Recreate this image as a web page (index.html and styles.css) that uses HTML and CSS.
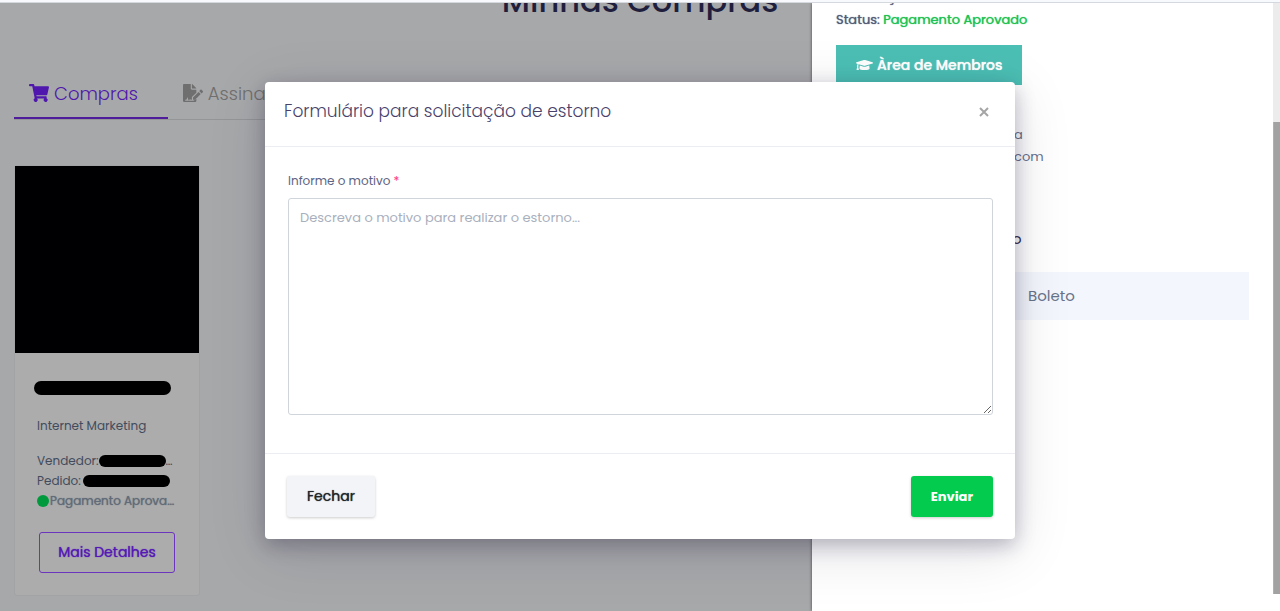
FILE: index.html
```html
<!DOCTYPE html>
<html lang="pt-BR">
<head>
<meta charset="utf-8">
<title>Minhas Compras</title>
<link rel="stylesheet" href="styles.css">
</head>
<body>
<div class="topline"></div>
<main class="page">
  <h1 class="page-title">Minhas Compras</h1>
  <nav class="tabs">
    <a class="tab tab-active" href="#compras">
      <svg class="tab-icon" viewBox="0 0 576 512" fill="currentColor" aria-hidden="true"><path d="M528 301l47-208c4-15-8-29-23-29H159l-9-45C148 8 138 0 127 0H24C11 0 0 11 0 24v16c0 13 11 24 24 24h70l70 343a56 56 0 1 0 67 9h210a56 56 0 1 0 64-10l5-26c4-14-8-28-23-28H218l-6-32h293c11 0 21-8 23-19z"/></svg>
      Compras
    </a>
    <a class="tab" href="#assinaturas">
      <svg class="tab-icon" viewBox="0 0 576 512" fill="currentColor" aria-hidden="true"><path fill-rule="evenodd" d="M24 0C11 0 0 11 0 24v464c0 13 11 24 24 24h336c13 0 24-11 24-24v-82l-68 66c-8 5-16 8-25 8H64v-32h22c10 0 19-7 23-17l19-58 28 83c4 12 21 14 27 2l8-15c5-8 18-9 25 0 5 6 7 5 40 5v-74l128-127v-87H256c-18 0-32-14-32-32V0zm232 0v128h128c0-6-2-12-7-17L273 7c-5-5-11-7-17-7zM288 386v62h62l161-161-62-62zM568 195l-28-28c-11-11-29-11-40 0l-32 33 68 67 32-32c11-11 11-29 0-40z"/></svg>
      Assinaturas
    </a>
  </nav>
  <article class="card">
    <div class="card-image"></div>
    <div class="card-body">
      <div class="redacted redacted-name"></div>
      <p class="category">Internet Marketing</p>
      <p class="detail">Vendedor:<span class="redacted redacted-seller"></span>…</p>
      <p class="detail">Pedido:<span class="redacted redacted-order"></span></p>
      <p class="detail paid"><span class="dot"></span>Pagamento Aprova…</p>
      <button class="btn-outline" type="button">Mais Detalhes</button>
    </div>
  </article>
</main>

<aside class="drawer">
  <div class="drawer-content">
    <p class="drawer-line drawer-first">Informação</p>
    <p class="drawer-line">Status: <span class="approved">Pagamento Aprovado</span></p>
    <a class="members" href="#membros">
      <svg class="cap-icon" viewBox="0 0 640 512" fill="currentColor" aria-hidden="true"><path d="M622 153L343 67c-15-4-31-4-46 0L18 153c-24 8-24 40 0 47l49 15c-11 14-18 30-18 48-10 6-17 16-17 28 0 11 6 21 15 27L21 430c-2 9 5 18 15 18h56c10 0 17-9 15-18L81 318c9-6 15-16 15-27s-6-21-15-27c1-15 8-28 20-37l196 60c27 8 43 1 46 0l279-86c24-8 24-40 0-48zM352 318c-32 10-57 2-64 0l-145-45-15 111c0 35 86 64 192 64s192-29 192-64l-15-111z"/></svg>
      Àrea de Membros
    </a>
    <div class="contact">
      <p>a</p>
      <p>com</p>
    </div>
    <h2 class="drawer-heading">o</h2>
    <p class="method">Boleto</p>
  </div>
  <div class="scrollbar"><div class="thumb"></div></div>
</aside>

<div class="modal-layer">
  <form class="modal" role="dialog" aria-labelledby="modal-title">
    <header class="modal-header">
      <h2 class="modal-title" id="modal-title">Formulário para solicitação de estorno</h2>
      <button class="close" type="button" aria-label="Fechar janela">
        <svg class="close-icon" viewBox="0 0 10 10" fill="none" stroke="currentColor" stroke-width="2" aria-hidden="true"><path d="M1 1l8 8M9 1L1 9"/></svg>
      </button>
    </header>
    <div class="modal-body">
      <label class="label" for="motivo">Informe o motivo <span class="required">*</span></label>
      <textarea class="reason" id="motivo" placeholder="Descreva o motivo para realizar o estorno..."></textarea>
    </div>
    <footer class="modal-footer">
      <button class="btn btn-light" type="button">Fechar</button>
      <button class="btn btn-success" type="submit">Enviar</button>
    </footer>
  </form>
</div>
</body>
</html>
```
FILE: styles.css
```css
* {
  box-sizing: border-box;
}

body {
  margin: 0;
  height: 100vh;
  overflow: hidden;
  display: flex;
  flex-direction: column;
  position: relative;
  background: #a7a8aa;
  color: #424b5c;
  font-family: Poppins, Inter, "Open Sans", sans-serif;
  font-size: 13px;
}

h1, h2, p {
  margin: 0;
}

button, textarea {
  font-family: inherit;
}

.topline {
  flex: none;
  height: 3px;
  background: #f7f9fd;
  border-bottom: 1px solid #d5d8dc;
  position: relative;
  z-index: 3;
}

.page {
  padding: 0 14px;
}

.page-title {
  margin-top: -26px;
  color: #1f1f3d;
  font-size: 32px;
  font-weight: 500;
  line-height: 48px;
  text-align: center;
}

.tabs {
  display: flex;
  margin-top: 42px;
  border-bottom: 1px solid #949597;
}

.tab {
  display: flex;
  align-items: center;
  gap: 5px;
  padding: 2px 30px 0 15px;
  height: 52px;
  color: #6f6f6f;
  font-size: 18px;
  font-weight: 300;
  text-decoration: none;
  border-bottom: 2px solid transparent;
}

.tab-active {
  color: #4f17ad;
  border-color: #4f1d9c;
}

.tab-icon {
  width: 20px;
  height: 18px;
}

.card {
  width: 186px;
  margin-top: 45px;
  background: #acacac;
  border: 1px solid #a2a3a5;
  border-radius: 3px;
}

.card-image {
  height: 187px;
  background: #000003;
}

.card-body {
  padding: 28px 24px 22px 22px;
}

.redacted {
  background: #000;
  border-radius: 8px;
}

.redacted-name {
  height: 14px;
  margin: 0 4px 0 -3px;
}

.category {
  margin: 21px 0 15px;
  font-size: 12px;
  line-height: 20px;
}

.detail {
  display: flex;
  align-items: center;
  font-size: 12px;
  line-height: 20px;
  white-space: nowrap;
}

.redacted-seller {
  flex: none;
  width: 67px;
  height: 12px;
}

.redacted-order {
  flex: none;
  width: 87px;
  height: 12px;
  margin-left: 2px;
}

.paid {
  gap: 1px;
  color: #626b78;
  text-shadow: 0 0 1px currentColor;
}

.dot {
  flex: none;
  width: 12px;
  height: 12px;
  border-radius: 50%;
  background: #009a3c;
}

.btn-outline {
  display: block;
  width: 136px;
  height: 41px;
  margin: 21px 0 0 2px;
  padding: 0;
  background: none;
  border: 1px solid #6b35bd;
  border-radius: 3px;
  color: #5519b5;
  font-size: 14px;
  font-weight: 400;
  text-shadow: 0 0 1px currentColor;
}

.drawer {
  position: absolute;
  top: 3px;
  right: 0;
  bottom: 0;
  width: 468px;
  display: flex;
  background: #fff;
  box-shadow: 0 0 3px rgba(0, 0, 0, 0.6);
  overflow: hidden;
  z-index: 1;
}

.drawer-content {
  flex: 1;
  padding: 0 24px;
}

.drawer-line {
  color: #535d78;
  font-size: 13px;
  line-height: 22px;
  text-shadow: 0 0 1px currentColor;
}

.drawer-first {
  margin-top: -16px;
}

.approved {
  color: #1fc152;
}

.members {
  display: inline-flex;
  align-items: center;
  gap: 4px;
  height: 40px;
  margin-top: 14px;
  padding: 0 20px;
  background: #4cbfb4;
  color: #fff;
  font-size: 14px;
  font-weight: 500;
  text-decoration: none;
  text-shadow: 0 0 1px currentColor;
}

.cap-icon {
  width: 17px;
  height: 14px;
}

.contact {
  margin: 39px 0 0 178px;
  color: #68718a;
  font-size: 13px;
  line-height: 22px;
}

.drawer-heading {
  margin: 60px 0 0 176px;
  color: #33334f;
  font-size: 15px;
  font-weight: 400;
  line-height: 22px;
}

.method {
  height: 48px;
  margin-top: 22px;
  padding-left: 192px;
  background: #f3f6fc;
  color: #68738a;
  font-size: 15px;
  line-height: 48px;
}

.scrollbar {
  width: 7px;
  padding: 119px 0 17px;
  background: linear-gradient(#ececec 80%, #fff 80%);
}

.thumb {
  height: 100%;
  background: #a2a2a2;
  border-left: 1px solid #b0b0b0;
}

.modal-layer {
  position: absolute;
  inset: 0;
  padding: 82px 16px 0;
  z-index: 2;
}

.modal {
  max-width: 750px;
  margin: 0 auto;
  background: #fff;
  border-radius: 4px;
  box-shadow: 0 6px 20px rgba(20, 15, 50, 0.28), 0 12px 60px rgba(20, 15, 50, 0.12);
}

.modal-header {
  display: flex;
  align-items: flex-start;
  justify-content: space-between;
  height: 65px;
  padding: 17px 26px 0 19px;
  border-bottom: 1px solid #ebedf2;
}

.modal-title {
  color: #48426b;
  font-size: 17px;
  font-weight: 300;
  line-height: 24px;
}

.close {
  display: flex;
  padding: 8px 0;
  background: none;
  border: 0;
  color: #a5a5a5;
}

.close-icon {
  width: 10px;
  height: 10px;
}

.modal-body {
  padding: 24px 22px 38px 23px;
}

.label {
  display: block;
  margin-bottom: 7px;
  color: #5e6482;
  font-size: 12px;
  line-height: 20px;
}

.required {
  color: #fd397a;
}

.reason {
  display: block;
  width: 100%;
  height: 217px;
  padding: 10px 11px;
  border: 1px solid #d0d5dc;
  border-radius: 3px;
  font-size: 13px;
  line-height: 18px;
  resize: vertical;
}

.reason::placeholder {
  color: #a9b0bd;
}

.modal-footer {
  display: flex;
  justify-content: space-between;
  padding: 22px;
  border-top: 1px solid #ebedf2;
}

.btn {
  height: 41px;
  padding: 0 20px;
  border: 0;
  border-radius: 3px;
  font-size: 13px;
  box-shadow: 0 1px 3px rgba(0, 0, 0, 0.2);
}

.btn-light {
  background: #f3f4f7;
  color: #212529;
  font-size: 14px;
  font-weight: 400;
  text-shadow: 0 0 1px currentColor;
}

.btn-success {
  background: #03cb4e;
  color: #fff;
  font-weight: 700;
}
```
